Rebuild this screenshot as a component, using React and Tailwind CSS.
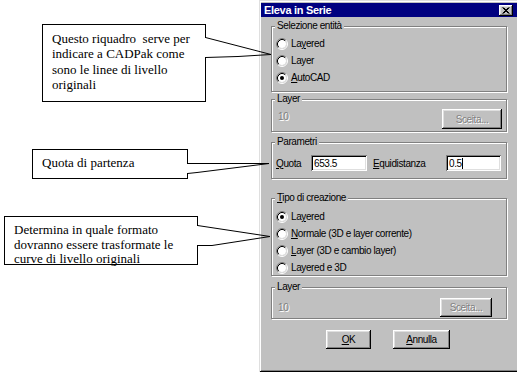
import React from 'react';

const raised =
  'shadow-[inset_-1px_-1px_0_#000,inset_1px_1px_0_#fff,inset_-2px_-2px_0_#808080,inset_2px_2px_0_#dfdfdf]';
const sunken =
  'shadow-[inset_1px_1px_0_#808080,inset_-1px_-1px_0_#fff,inset_2px_2px_0_#000,inset_-2px_-2px_0_#dfdfdf]';
const disabled = 'text-[#808080] [text-shadow:1px_1px_0_#fff]';

function Radio({ checked }) {
  return (
    <svg width="12" height="12" viewBox="0 0 12 12" className="shrink-0">
      <circle cx="6" cy="6" r="4" fill="#fff" />
      <path d="M2.11 9.89A5.5 5.5 0 0 1 9.89 2.11" fill="none" stroke="#808080" />
      <path d="M9.89 2.11A5.5 5.5 0 0 1 2.11 9.89" fill="none" stroke="#fff" />
      <path d="M2.82 9.18A4.5 4.5 0 0 1 9.18 2.82" fill="none" stroke="#000" />
      <path d="M9.18 2.82A4.5 4.5 0 0 1 2.82 9.18" fill="none" stroke="#dfdfdf" />
      {checked && <circle cx="6" cy="6" r="2" fill="#000" />}
    </svg>
  );
}

function Option({ checked, children }) {
  return (
    <div className="flex items-center gap-[3px] h-[17px]">
      <Radio checked={checked} />
      <span>{children}</span>
    </div>
  );
}

function Group({ label, className = '', children }) {
  return (
    <div className={`relative w-[236px] border border-[#808080] shadow-[inset_1px_1px_0_#fff,1px_1px_0_#fff] ${className}`}>
      <span className="absolute -top-[7px] left-[3px] bg-[#c0c0c0] px-[2px] leading-[12px]">{label}</span>
      {children}
    </div>
  );
}

function Callout({ className, children }) {
  return (
    <div className={`bg-white border border-black font-['Liberation_Serif',serif] text-[13px] text-black ${className}`}>
      {children}
    </div>
  );
}

export default function App() {
  return (
    <div className="relative w-[517px] h-[374px] bg-white overflow-hidden flex">
      <div className="w-[259px] shrink-0 flex flex-col">
        <Callout className="mt-[24px] ml-[42px] w-[164px] h-[78px] pl-[9px] pt-[6px] leading-[15.3px]">
          Questo riquadro&nbsp; serve per<br />
          indicare a CADPak come<br />
          sono le linee di livello<br />
          originali
        </Callout>
        <Callout className="mt-[47px] ml-[32px] w-[156px] h-[30px] pl-[9px] pt-[5px] leading-[15px]">
          Quota di partenza
        </Callout>
        <Callout className="mt-[37px] ml-[4px] w-[194px] h-[49px] pl-[9px] pt-[6px] leading-[14.5px]">
          Determina in quale formato<br />
          dovranno essere trasformate le<br />
          curve di livello originali
        </Callout>
      </div>

      <div className="w-[260px] h-[372px] shrink-0 bg-[#c0c0c0] flex flex-col pt-[3px] font-['Liberation_Sans',sans-serif] text-[10px] tracking-[-0.4px] text-black shadow-[inset_1px_1px_0_#dfdfdf,inset_-1px_-1px_0_#000,inset_2px_2px_0_#fff,inset_-2px_-2px_0_#808080]">
        <div className="mx-[2px] h-[14px] bg-[#000080] flex items-center justify-between pl-[3px] pr-[4px]">
          <span className="text-white font-bold text-[11px] tracking-[-0.3px] leading-none">Eleva in Serie</span>
          <div className={`w-[14px] h-[11px] bg-[#c0c0c0] flex items-center justify-center ${raised}`}>
            <svg width="8" height="7" viewBox="0 0 8 7">
              <path d="M0.5 0.5L6.5 6.5M1.5 0.5L7.5 6.5M6.5 0.5L0.5 6.5M7.5 0.5L1.5 6.5" stroke="#000" strokeWidth="1" />
            </svg>
          </div>
        </div>

        <div className="ml-[12px] flex flex-col">
          <Group label="Selezione entità" className="mt-[9px] h-[66px] pt-[8px] pl-[4px]">
            <Option>La<u>y</u>ered</Option>
            <Option>Layer</Option>
            <Option checked><u>A</u>utoCAD</Option>
          </Group>

          <Group label="Layer" className="mt-[7px] h-[33px] pt-[9px] pl-[6px] pr-[4px] flex justify-between items-start">
            <span className={`mt-[2px] leading-[12px] ${disabled}`}>10</span>
            <div className={`w-[60px] h-[20px] flex items-center justify-center ${raised} ${disabled}`}>Sceita...</div>
          </Group>

          <Group label="Parametri" className="mt-[10px] h-[37px] pt-[12px] pl-[4px] flex items-start">
            <div className="flex items-center h-[16px]">
              <span className="w-[35px]"><u>Q</u>uota</span>
              <div className={`w-[56px] h-[16px] bg-white pl-[3px] flex items-center ${sunken}`}>653.5</div>
              <span className="ml-[6px] w-[73px]"><u>E</u>quidistanza</span>
              <div className={`w-[55px] h-[16px] bg-white pl-[3px] flex items-center ${sunken}`}>
                0.5<span className="w-px h-[11px] bg-black" />
              </div>
            </div>
          </Group>

          <Group label={<><u>T</u>ipo di creazione</>} className="mt-[19px] h-[78px] pt-[9px] pl-[4px]">
            <Option checked>La<u>y</u>ered</Option>
            <Option><u>N</u>ormale (3D e layer corrente)</Option>
            <Option><u>L</u>ayer (3D e cambio layer)</Option>
            <Option>Layered e 3D</Option>
          </Group>

          <Group label="Layer" className="mt-[11px] h-[32px] pt-[10px] pl-[6px] pr-[14px] flex justify-between items-start">
            <span className={`mt-[4px] leading-[12px] ${disabled}`}>10</span>
            <div className={`w-[52px] h-[19px] flex items-center justify-center ${raised} ${disabled}`}>Sceita...</div>
          </Group>

          <div className="mt-[11px] ml-[55px] flex gap-[22px]">
            <div className={`w-[45px] h-[19px] flex items-center justify-center ${raised}`}><u>O</u>K</div>
            <div className={`w-[57px] h-[19px] flex items-center justify-center ${raised}`}><u>A</u>nnulla</div>
          </div>
        </div>
      </div>

      <svg className="absolute inset-0 pointer-events-none" width="517" height="374" viewBox="0 0 517 374">
        <g fill="none" strokeWidth="1">
          <path d="M205.5 38V57" stroke="#fff" />
          <path d="M205.5 37.5L271 54.5M205.5 57.5L238 56.5L271 54.5" stroke="#000" />
          <path d="M187.5 164V173" stroke="#fff" />
          <path d="M187.5 163.5H269M187.5 173.5L197 172.5L269 163.5" stroke="#000" />
          <path d="M197.5 226V245" stroke="#fff" />
          <path d="M197.5 225.5L270 236.5M197.5 245.5L212 245.5L270 236.5" stroke="#000" />
        </g>
      </svg>
    </div>
  );
}
